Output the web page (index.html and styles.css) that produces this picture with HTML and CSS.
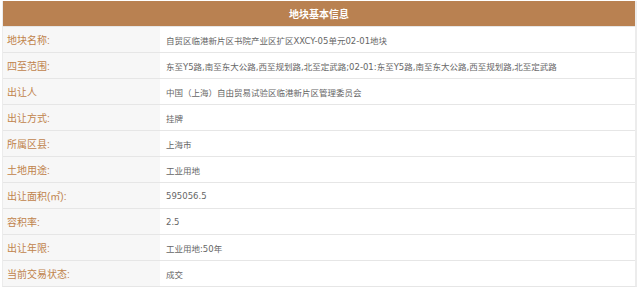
FILE: index.html
```html
<!DOCTYPE html>
<html lang="zh-CN">
<head>
<meta charset="utf-8">
<title>地块基本信息</title>
<link rel="stylesheet" href="styles.css">
</head>
<body>
<div class="info">
  <div class="info-head">地块基本信息</div>
  <div class="row"><div class="label">地块名称:</div><div class="value">自贸区临港新片区书院产业区扩区XXCY-05单元02-01地块</div></div>
  <div class="row"><div class="label">四至范围:</div><div class="value">东至Y5路,南至东大公路,西至规划路,北至定武路;02-01:东至Y5路,南至东大公路,西至规划路,北至定武路</div></div>
  <div class="row"><div class="label">出让人</div><div class="value">中国（上海）自由贸易试验区临港新片区管理委员会</div></div>
  <div class="row"><div class="label">出让方式:</div><div class="value">挂牌</div></div>
  <div class="row"><div class="label">所属区县:</div><div class="value">上海市</div></div>
  <div class="row"><div class="label">土地用途:</div><div class="value">工业用地</div></div>
  <div class="row"><div class="label">出让面积(㎡):</div><div class="value">595056.5</div></div>
  <div class="row"><div class="label">容积率:</div><div class="value">2.5</div></div>
  <div class="row"><div class="label">出让年限:</div><div class="value">工业用地:50年</div></div>
  <div class="row"><div class="label">当前交易状态:</div><div class="value">成交</div></div>
</div>
</body>
</html>
```
FILE: styles.css
```css
html, body {
  margin: 0;
  padding: 0;
  background: #ffffff;
}
body {
  font-family: "Liberation Sans", "Noto Sans CJK SC", sans-serif;
}
.info {
  margin: 1px 3px 0 2px;
  border-left: 1px solid #ececec;
  border-right: 2px solid #ececec;
  border-bottom: 1px solid #e6e6e6;
}
.info-head {
  height: 25px;
  background: #b98151;
  color: #ffffff;
  font-size: 10px;
  font-weight: bold;
  display: flex;
  align-items: center;
  justify-content: center;
}
.row {
  display: grid;
  grid-template-columns: 157px 1fr;
  height: 25px;
  border-top: 1px solid #e6e6e6;
}
.label {
  background: #f7f7f7;
  color: #c0834b;
  font-size: 10px;
  padding-left: 4px;
  display: flex;
  align-items: center;
}
.value {
  background: #ffffff;
  color: #666666;
  font-family: "DejaVu Sans", "Noto Sans CJK SC", sans-serif;
  font-size: 8.5px;
  padding-left: 6px;
  display: flex;
  align-items: center;
  white-space: nowrap;
}
```
